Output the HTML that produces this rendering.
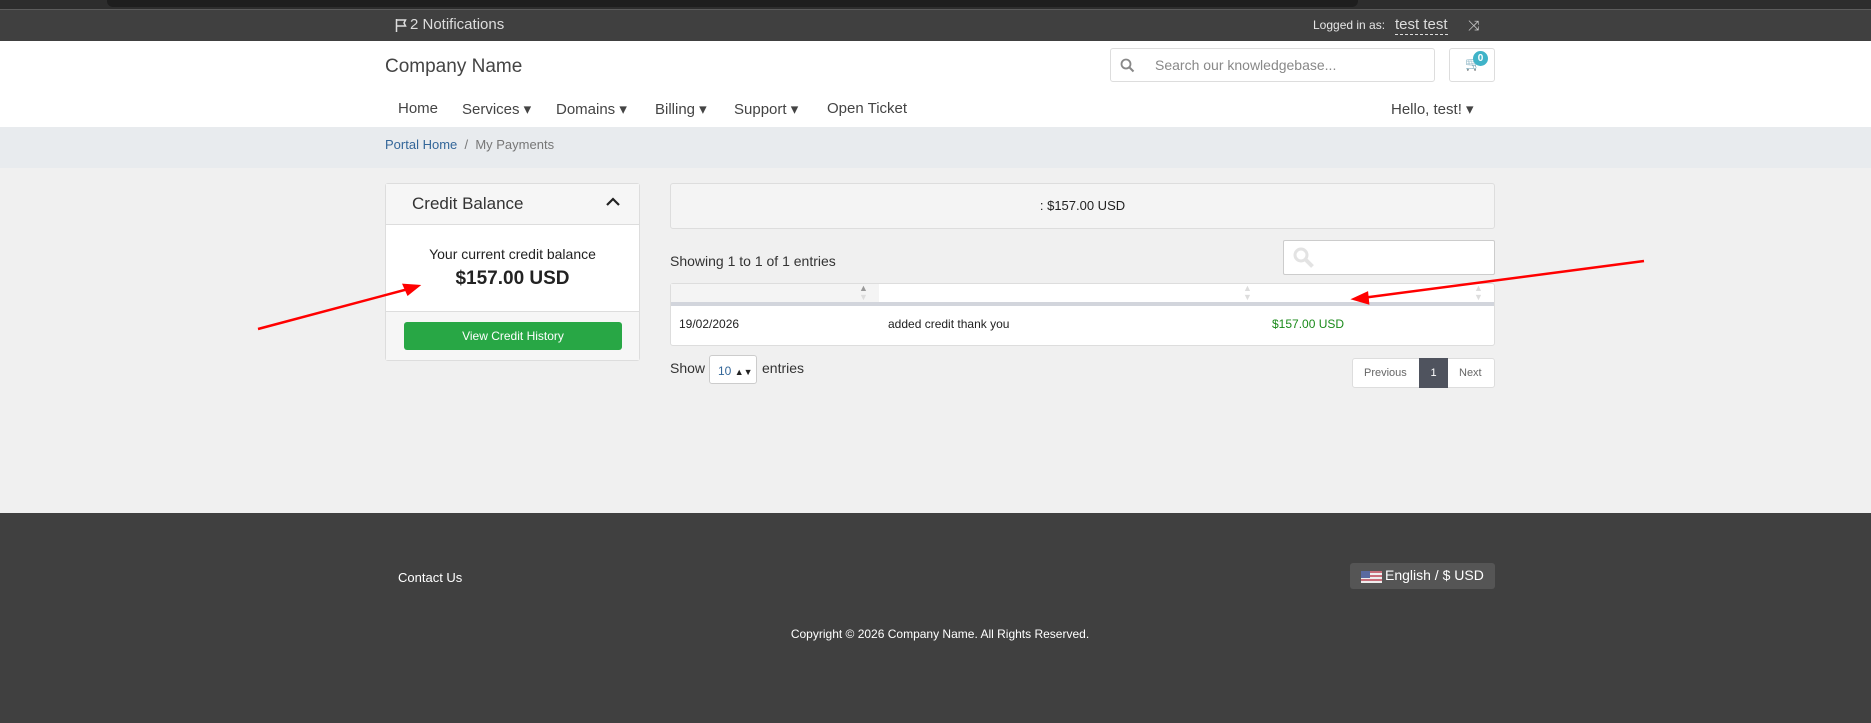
<!DOCTYPE html>
<html><head><meta charset="utf-8"><style>
*{box-sizing:border-box;margin:0;padding:0}
body{width:1871px;height:723px;position:relative;overflow:hidden;background:#f0f0f0;font-family:"Liberation Sans",sans-serif;color:#333}
.a{position:absolute;white-space:nowrap}
.t{font-size:15px}
</style></head><body>
<div class="a" style="left:0;top:0;width:1871px;height:10px;background:#2d2d2d"></div>
<div class="a" style="left:107px;top:0;width:1251px;height:7px;background:#1e1e1e;border-radius:0 0 6px 6px"></div>
<div class="a" style="left:0;top:9px;width:1871px;height:1px;background:#5c5c5c"></div>
<div class="a" style="left:0;top:10px;width:1871px;height:31px;background:#404040"></div>
<svg class="a" style="left:395px;top:18px" width="13" height="15" viewBox="0 0 13 15"><path d="M1.5 1v13M1.5 2h9l-1.5 3 1.5 3h-9" fill="none" stroke="#ddd" stroke-width="1.5"/></svg>
<div class="a" style="left:410px;top:16px;font-size:15px;color:#ddd">2 Notifications</div>
<div class="a" style="left:1313px;top:18px;font-size:12px;color:#e6e6e6">Logged in as:</div>
<div class="a" style="left:1395px;top:15px;font-size:15px;color:#ddd;border-bottom:1px dashed #ddd;line-height:19px">test test</div>
<div class="a" style="left:1468px;top:17px;font-size:14px;color:#ccc">⤨</div>
<div class="a" style="left:0;top:41px;width:1871px;height:86px;background:#fff"></div>
<div class="a" style="left:385px;top:56px;font-size:19px;color:#444">Company Name</div>
<div class="a" style="left:1110px;top:48px;width:325px;height:34px;border:1px solid #ddd;border-radius:3px;background:#fff"></div>
<svg class="a" style="left:1120px;top:58px" width="15" height="15" viewBox="0 0 15 15"><circle cx="6" cy="6" r="4.5" fill="none" stroke="#888" stroke-width="1.8"/><path d="M9.5 9.5l4 4" stroke="#888" stroke-width="2"/></svg>
<div class="a" style="left:1155px;top:57px;font-size:14px;color:#888">Search our knowledgebase...</div>
<div class="a" style="left:1449px;top:48px;width:46px;height:34px;border:1px solid #ddd;border-radius:3px;background:#fff"></div>
<div class="a" style="left:1465px;top:56px;font-size:13px;color:#ccc">🛒</div>
<div class="a" style="left:1473px;top:51px;width:15px;height:15px;border-radius:50%;background:#3fb3c8;color:#fff;font-size:10px;text-align:center;line-height:15px;font-weight:bold">0</div>
<div class="a t" style="left:398px;top:100px;color:#444">Home</div>
<div class="a t" style="left:462px;top:100px;color:#444">Services ▾</div>
<div class="a t" style="left:556px;top:100px;color:#444">Domains ▾</div>
<div class="a t" style="left:655px;top:100px;color:#444">Billing ▾</div>
<div class="a t" style="left:734px;top:100px;color:#444">Support ▾</div>
<div class="a t" style="left:827px;top:100px;color:#444">Open Ticket</div>
<div class="a t" style="left:1391px;top:100px;color:#444">Hello, test! ▾</div>
<div class="a" style="left:0;top:127px;width:1871px;height:41px;background:#e8ebee"></div>
<div class="a" style="left:385px;top:137px;font-size:13px;color:#336699">Portal Home <span style="color:#777">&nbsp;/&nbsp; My Payments</span></div>
<div class="a" style="left:385px;top:183px;width:255px;height:178px;background:#fff;border:1px solid #ddd;border-radius:3px"></div>
<div class="a" style="left:386px;top:184px;width:253px;height:41px;background:#f6f6f6;border-bottom:1px solid #ddd"></div>
<div class="a" style="left:412px;top:194px;font-size:17px;color:#333">Credit Balance</div>
<svg class="a" style="left:605px;top:196px" width="16" height="12" viewBox="0 0 16 12"><path d="M2 9l6-6 6 6" fill="none" stroke="#222" stroke-width="2.2"/></svg>
<div class="a" style="left:386px;top:246px;width:253px;text-align:center;font-size:14px;color:#222">Your current credit balance</div>
<div class="a" style="left:386px;top:268px;width:253px;text-align:center;font-size:19px;font-weight:bold;color:#222">$157.00 USD</div>
<div class="a" style="left:386px;top:311px;width:253px;height:49px;background:#f6f6f6;border-top:1px solid #ddd"></div>
<div class="a" style="left:404px;top:322px;width:218px;height:28px;background:#28a745;border-radius:3px;color:#fff;font-size:12px;text-align:center;line-height:28px">View Credit History</div>
<div class="a" style="left:670px;top:183px;width:825px;height:46px;background:#f4f4f4;border:1px solid #ddd;border-radius:3px"></div>
<div class="a" style="left:670px;top:198px;width:825px;text-align:center;font-size:13px;color:#222">: $157.00 USD</div>
<div class="a" style="left:670px;top:253px;font-size:14px;color:#333">Showing 1 to 1 of 1 entries</div>
<div class="a" style="left:1283px;top:240px;width:212px;height:35px;background:#fff;border:1px solid #ccc;border-radius:2px"></div>
<svg class="a" style="left:1292px;top:246px" width="24" height="24" viewBox="0 0 24 24"><circle cx="9" cy="9" r="6" fill="none" stroke="#e3e3e3" stroke-width="3"/><path d="M13.5 13.5l7 7" stroke="#e3e3e3" stroke-width="4"/></svg>
<div class="a" style="left:670px;top:283px;width:825px;height:63px;background:#fff;border:1px solid #ddd;border-radius:3px"></div>
<div class="a" style="left:671px;top:284px;width:208px;height:18px;background:#f4f4f4"></div>
<div class="a" style="left:671px;top:302px;width:823px;height:4px;background:#d2d5dc"></div>
<div class="a" style="left:859px;top:284px;font-size:9px;color:#999;line-height:9px">▲<br><span style="color:#ddd">▼</span></div>
<div class="a" style="left:1243px;top:284px;font-size:9px;color:#ddd;line-height:9px">▲<br>▼</div>
<div class="a" style="left:1474px;top:284px;font-size:9px;color:#ddd;line-height:9px">▲<br>▼</div>
<div class="a" style="left:679px;top:317px;font-size:12px;color:#222">19/02/2026</div>
<div class="a" style="left:888px;top:317px;font-size:12px;color:#222">added credit thank you</div>
<div class="a" style="left:1272px;top:317px;font-size:12px;color:#1a8a1a">$157.00 USD</div>
<div class="a" style="left:670px;top:360px;font-size:14px;color:#333">Show</div>
<div class="a" style="left:709px;top:355px;width:48px;height:29px;background:#fff;border:1px solid #ccc;border-radius:3px;font-size:12px;color:#336699;padding:8px 0 0 8px">10 <span style="color:#222;font-size:9px">▲▼</span></div>
<div class="a" style="left:762px;top:360px;font-size:14px;color:#333">entries</div>
<div class="a" style="left:1352px;top:358px;width:143px;height:30px;background:#fff;border:1px solid #ddd;border-radius:3px"></div>
<div class="a" style="left:1364px;top:367px;font-size:11px;color:#666">Previous</div>
<div class="a" style="left:1419px;top:358px;width:29px;height:30px;background:#4f535e;color:#fff;font-size:11px;text-align:center;line-height:30px">1</div>
<div class="a" style="left:1459px;top:367px;font-size:11px;color:#666">Next</div>
<svg class="a" style="left:0;top:0" width="1871" height="723"><g stroke="#f00" stroke-width="2.5" fill="#f00"><path d="M258 329L412 288"/><path d="M418 286l-14-1 4 9z"/><path d="M1644 261L1362 298"/><path d="M1354 299l13-6 1 10z"/></g></svg>
<div class="a" style="left:0;top:513px;width:1871px;height:210px;background:#404040"></div>
<div class="a" style="left:398px;top:570px;font-size:13px;color:#fff">Contact Us</div>
<div class="a" style="left:1350px;top:563px;width:145px;height:26px;background:#555;border-radius:3px"></div>
<div class="a" style="left:1361px;top:571px;width:21px;height:12px;background:repeating-linear-gradient(#c86e7a 0 2px,#eee 2px 4px)"><div style="width:9px;height:7px;background:#5a6aa0"></div></div>
<div class="a" style="left:1385px;top:567px;font-size:14px;color:#fff">English / $ USD</div>
<div class="a" style="left:0;top:627px;width:1880px;text-align:center;font-size:12px;color:#fff">Copyright © 2026 Company Name. All Rights Reserved.</div>
</body></html>
